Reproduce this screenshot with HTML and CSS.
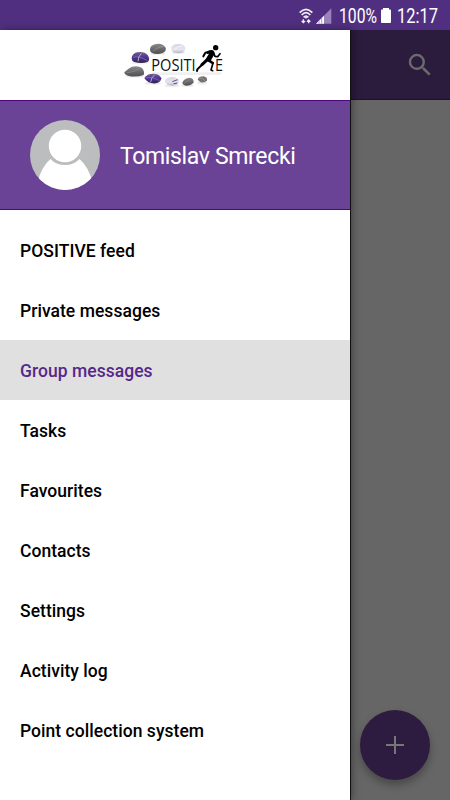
FILE: index.html
```
<!DOCTYPE html>
<html lang="en">
<head>
    <meta charset="UTF-8">
    <title>Positive</title>
    <link rel="stylesheet" href="styles.css">
</head>
<body>
    <div class="status-bar">
        <svg class="status-wifi" width="14" height="16" viewBox="0 0 42 48" fill="none" stroke="#f3eef8" stroke-width="5">
            <path d="M2 14Q21-6 40 14M8 21Q21 7 34 21M14 28Q21 20 28 28"/>
            <path d="M17 27h8l-4 6z" fill="#f3eef8" stroke="none"/>
            <path d="M13 34v10M8 39l5 5 5-5M29 46V36M24 41l5-5 5 5" stroke-width="4"/>
        </svg>
        <svg class="status-signal" width="16" height="16" viewBox="0 0 48 48">
            <path d="M0 47L46 1V47z" fill="#9a83b8"/>
            <path d="M0 47L24 23V47z" fill="#fff"/>
            <path d="M9 34V47M17 28V47" stroke="#8b71ad" stroke-width="2"/>
        </svg>
        <svg class="status-percent" width="40" height="28" viewBox="0 0 40 28">
            <text class="status-text" x="1" y="21" textLength="38" lengthAdjust="spacingAndGlyphs">100%</text>
        </svg>
        <svg class="status-battery" width="10" height="15" viewBox="0 0 10 15">
            <path d="M2 0h6v1.500h1q1 0 1 1V14q0 1-1 1H1q-1 0-1-1V2.500q0-1 1-1h1z" fill="#fff"/>
        </svg>
        <svg class="status-time" width="43" height="28" viewBox="0 0 43 28">
            <text class="status-text" x="1" y="21" textLength="41" lengthAdjust="spacingAndGlyphs">12:17</text>
        </svg>
    </div>

    <div class="screen">
        <div class="app-bar">
            <svg width="30" height="30" viewBox="0 0 24 24" fill="#6b6b6b">
                <path d="M15.500 14h-.79l-.28-.27A6.470 6.470 0 0 0 16 9.500 6.500 6.500 0 1 0 9.500 16c1.610 0 3.090-.59 4.230-1.570l.27.28v.79l5 4.990L20.490 19l-4.990-5zm-6 0C7.010 14 5 11.990 5 9.500S7.010 5 9.500 5 14 7.010 14 9.500 11.990 14 9.500 14z"/>
            </svg>
        </div>
        <button class="add-button" aria-label="Add">
            <svg width="18" height="18" viewBox="0 0 18 18" fill="#777">
                <path d="M8 0h2v8h8v2h-8v8H8v-8H0V8h8z"/>
            </svg>
        </button>

        <div class="drawer">
            <div class="logo">
                <svg width="120" height="60" viewBox="0 0 360 180">
                    <defs>
                        <linearGradient id="stone" x1="0" y1="0" x2="0" y2="1">
                            <stop offset="0" stop-color="#8b8b8e"/>
                            <stop offset=".55" stop-color="#68686b"/>
                            <stop offset="1" stop-color="#505052"/>
                        </linearGradient>
                        <linearGradient id="purpleStone" x1="0" y1="0" x2="0" y2="1">
                            <stop offset="0" stop-color="#6d6486"/>
                            <stop offset=".5" stop-color="#52309a"/>
                            <stop offset="1" stop-color="#302747"/>
                        </linearGradient>
                        <linearGradient id="lightStone" x1="0" y1="0" x2="0" y2="1">
                            <stop offset="0" stop-color="#d7d5e5"/>
                            <stop offset=".6" stop-color="#e6e5ee"/>
                            <stop offset="1" stop-color="#b5b4bd"/>
                        </linearGradient>
                        <linearGradient id="shade" x1="0" y1="0" x2="0" y2="1">
                            <stop offset="0" stop-color="#bbb" stop-opacity=".55"/>
                            <stop offset="1" stop-color="#bbb" stop-opacity="0"/>
                        </linearGradient>
                    </defs>
                    <g fill="url(#shade)">
                        <ellipse cx="76" cy="83" rx="25" ry="7"/>
                        <ellipse cx="59" cy="124" rx="28" ry="7"/>
                        <ellipse cx="113" cy="146" rx="24" ry="6"/>
                        <ellipse cx="171" cy="153" rx="22" ry="6"/>
                        <ellipse cx="218" cy="153" rx="18" ry="5"/>
                        <ellipse cx="261" cy="145" rx="15" ry="6"/>
                        <ellipse cx="129" cy="57" rx="22" ry="5"/>
                        <ellipse cx="190" cy="54" rx="20" ry="5"/>
                    </g>
                    <path d="M112 112H322L318 120H118z" fill="#ccc" opacity=".3"/>
                    <!-- stones -->
                    <path d="M105 43Q106 30 123 27Q143 24 152 38Q155 48 143 54Q124 60 110 53Q104 50 105 43z" fill="url(#stone)"/>
                    <path d="M114 50Q122 38 147 34" fill="none" stroke="#9d9da0" stroke-width="2"/>
                    <path d="M168 39Q172 26 192 27Q212 28 211 42Q208 54 190 55Q168 53 168 39z" fill="url(#lightStone)"/>
                    <path d="M178 44Q187 33 204 33" fill="none" stroke="#f5f5fa" stroke-width="3"/>
                    <path d="M50 70Q51 56 66 52Q87 48 98 60Q106 72 99 80Q80 87 58 81Q50 78 50 70z" fill="url(#purpleStone)"/>
                    <path d="M54 67Q72 61 97 77" fill="none" stroke="#8d7ab5" stroke-width="2"/>
                    <path d="M69 79Q69 65 79 55" fill="none" stroke="#b6abc9" stroke-width="3"/>
                    <path d="M28 112Q36 103 49 96Q67 90 81 99Q90 110 86 120Q62 128 39 122Q28 119 28 112z" fill="url(#stone)"/>
                    <path d="M34 114Q58 112 77 99" fill="none" stroke="#8d8d90" stroke-width="2"/>
                    <path d="M88 129Q97 115 117 116Q134 117 139 130Q138 142 123 145Q98 147 88 129z" fill="url(#purpleStone)"/>
                    <path d="M92 128Q113 124 134 137" fill="none" stroke="#8d7ab5" stroke-width="2"/>
                    <path d="M107 141Q109 127 119 119" fill="none" stroke="#b6abc9" stroke-width="3"/>
                    <path d="M149 139Q153 127 170 126Q187 126 193 138Q191 150 173 152Q153 151 149 139z" fill="url(#lightStone)"/>
                    <path d="M172 140L188 134M176 146L187 144" fill="none" stroke="#67508d" stroke-width="3"/>
                    <path d="M202 143Q207 130 224 128Q237 130 236 143Q229 151 216 152Q203 151 202 143z" fill="url(#stone)"/>
                    <path d="M207 146L228 131" stroke="#858588" stroke-width="2"/>
                    <path d="M248 134Q251 124 266 124Q278 127 276 137Q269 144 257 142z" fill="#77716d"/>
                    <path d="M252 130Q262 126 271 138" fill="none" stroke="#aaa4a0" stroke-width="2"/>
                    <text class="logo-text" x="109" y="108" textLength="133" lengthAdjust="spacingAndGlyphs">POSITI</text>
                    <text class="logo-text" x="300" y="108" textLength="24" lengthAdjust="spacingAndGlyphs">E</text>
                    <!-- runner -->
                    <ellipse cx="302" cy="38" rx="8" ry="8"/>
                    <path d="M275 50Q284 43 294 46Q301 51 297 60L287 77Q278 84 271 75Q275 66 282 56L276 57z"/>
                    <g fill="none" stroke="#000" stroke-linejoin="round" stroke-linecap="round">
                        <path d="M284 50L271 53L265 64" stroke-width="6"/>
                        <path d="M296 54L300 64L308 65L315 56" stroke-width="5"/>
                        <path d="M277 74L261 89" stroke-width="9"/>
                        <path d="M263 87L247 103L246 108" stroke-width="6"/>
                        <path d="M281 76L293 84" stroke-width="8"/>
                        <path d="M294 84L288 105L293 107" stroke-width="5"/>
                    </g>
                </svg>
            </div>
            <div class="profile">
                <svg width="70" height="70" viewBox="0 0 70 70">
                    <defs><clipPath id="avatar"><circle cx="35" cy="35" r="35"/></clipPath></defs>
                    <g clip-path="url(#avatar)">
                        <path d="M0 0h70v70H0z" fill="#bbbdbf"/>
                        <path d="M7 63Q12 46 20.500 39Q26 45 35 45T49.500 39Q58 46 63 63V70H7z" fill="#fff"/>
                        <circle cx="35" cy="26" r="16.200" fill="#fff"/>
                    </g>
                </svg>
                <span class="profile-name">Tomislav Smrecki</span>
            </div>
            <nav class="menu">
                <a class="menu-item">POSITIVE feed</a>
                <a class="menu-item">Private messages</a>
                <a class="menu-item active">Group messages</a>
                <a class="menu-item">Tasks</a>
                <a class="menu-item">Favourites</a>
                <a class="menu-item">Contacts</a>
                <a class="menu-item">Settings</a>
                <a class="menu-item">Activity log</a>
                <a class="menu-item">Point collection system</a>
            </nav>
        </div>
    </div>
</body>
</html>
```
FILE: styles.css
```
* {
    box-sizing: border-box;
}
body {
    margin: 0;
    height: 800px;
    overflow: hidden;
    font-family: Roboto, sans-serif;
    background: #666;
}
.status-bar {
    height: 30px;
    display: flex;
    align-items: center;
    justify-content: flex-end;
    padding: 1px 11px 0 0;
    background: #512f80;
}
.status-text {
    font-size: 19.5px;
    fill: #fff;
}
.status-wifi {
    margin-right: 3px;
}
.status-signal {
    margin-right: 6px;
}
.status-percent {
    margin-right: 3px;
}
.status-battery {
    margin-right: 5px;
}
.screen {
    position: relative;
    height: 770px;
}
.app-bar {
    height: 70px;
    display: flex;
    align-items: center;
    justify-content: flex-end;
    padding-right: 15px;
    background: #2b1b3c;
    border-bottom: 1px solid #22102f;
}
.add-button {
    position: absolute;
    right: 20px;
    bottom: 20px;
    width: 70px;
    height: 70px;
    display: flex;
    align-items: center;
    justify-content: center;
    padding: 0;
    border: none;
    border-radius: 50%;
    background: #2e1c40;
    box-shadow: 0 5px 9px rgba(0, 0, 0, 0.3);
}
/* side menu over the page */
.drawer {
    position: absolute;
    left: 0;
    top: 0;
    width: 350px;
    height: 770px;
    background: #fff;
    box-shadow: 1px 0 0 #111, 2px 0 8px rgba(0, 0, 0, 0.4);
}
.logo {
    height: 70px;
    display: flex;
    justify-content: center;
    padding-top: 5px;
}
.logo-text {
    font-family: "Open Sans", sans-serif;
    font-size: 49px;
    fill: #111;
}
.profile {
    height: 110px;
    display: flex;
    align-items: center;
    gap: 20px;
    padding-left: 30px;
    background: #6b4396;
    border-top: 1px solid #4b087f;
    border-bottom: 1px solid #4b087f;
}
.profile-name {
    color: #fff;
    font-size: 23px;
    letter-spacing: -0.35px;
    padding-top: 2px;
}
.menu {
    padding-top: 10px;
}
.menu-item {
    height: 60px;
    display: flex;
    align-items: center;
    padding: 1px 20px 0;
    color: #000;
    font-size: 17.5px;
    font-weight: 500;
    letter-spacing: 0.04px;
}
.menu-item.active {
    background: #e0e0e0;
    color: #562889;
}
```
